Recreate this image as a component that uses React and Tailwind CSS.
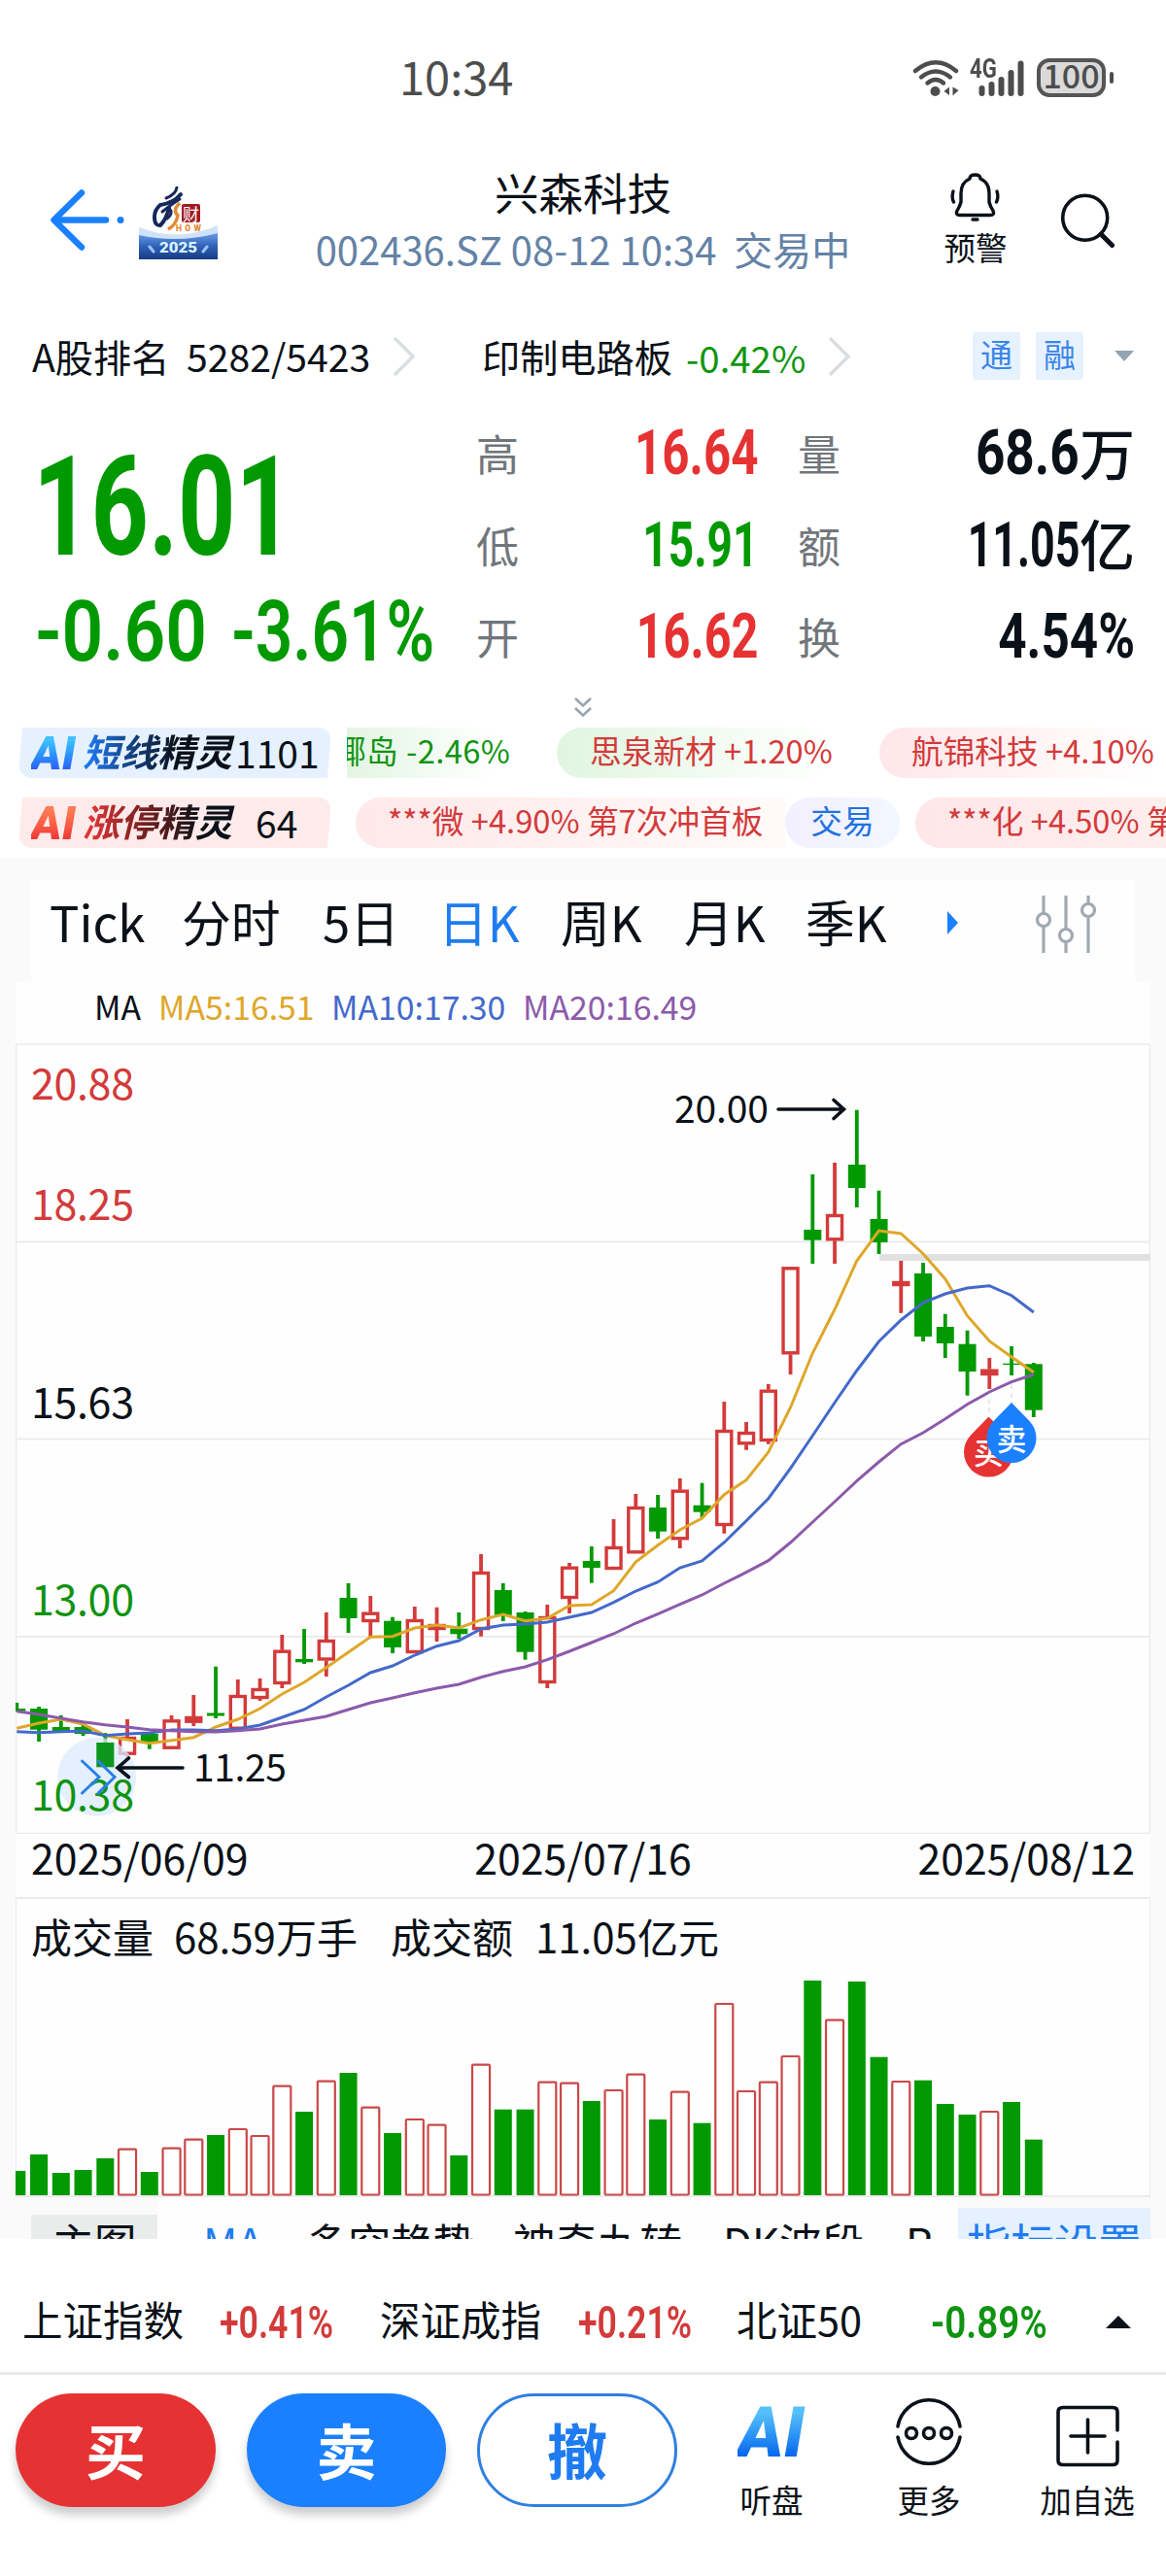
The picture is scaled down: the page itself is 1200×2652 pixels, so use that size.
import { Fragment } from 'react';

const RED = '#d33a3a';
const GREEN = '#009900';
const INK = '#0b1118';

// candle geometry: [direction, high, body top, body bottom, low, volume top]
const CANDLES = [
  ['g', 1753, 1759, 1761.5, 1762, 2235], ['g', 1757, 1759, 1780.7, 1793, 2218], ['g', 1766, 1778, 1782, 1782, 2237],
  ['g', 1775, 1778, 1785, 1787, 2234], ['g', 1784, 1794, 1819, 1819, 2222], ['r', 1770, 1788, 1806.7, 1811, 2212.7],
  ['g', 1784, 1785, 1795, 1800.7, 2236], ['r', 1766, 1770.3, 1800.7, 1800.7, 2211.7], ['r', 1745, 1767, 1773.7, 1777, 2202.7],
  ['g', 1715.7, 1763.5, 1766.5, 1769, 2198], ['r', 1729, 1745, 1780.7, 1780.7, 2192], ['r', 1728, 1738, 1749, 1751, 2199],
  ['r', 1683, 1698.7, 1734, 1738, 2147.7], ['g', 1677, 1708, 1711.3, 1713, 2174], ['r', 1660, 1688, 1709.5, 1726, 2142.7],
  ['g', 1630, 1645, 1666, 1681, 2134], ['r', 1643, 1659.7, 1670, 1686, 2169.7], ['g', 1664.7, 1668.7, 1696, 1702, 2196],
  ['r', 1654, 1667, 1702, 1702, 2182], ['r', 1654.7, 1672, 1678, 1690, 2187.7], ['g', 1660, 1676.7, 1682.3, 1687, 2219],
  ['r', 1600, 1618, 1678, 1684.7, 2125.7], ['g', 1630, 1637, 1662.7, 1669, 2171.7], ['g', 1659, 1660, 1700.7, 1708.7, 2171.7],
  ['r', 1652, 1664, 1733, 1738, 2143.7], ['r', 1609, 1612.7, 1646, 1661, 2144.7], ['g', 1592, 1607, 1614, 1629.7, 2163],
  ['r', 1564, 1592, 1616, 1616, 2152], ['r', 1538, 1551, 1599.3, 1599.3, 2135.7], ['g', 1539, 1552, 1576.7, 1584, 2182],
  ['r', 1522, 1533.7, 1585.3, 1594, 2153.7], ['g', 1526.7, 1549.7, 1556.7, 1562, 2185.7], ['r', 1443, 1472, 1571, 1578.7, 2063],
  ['r', 1464, 1474, 1487.3, 1492.7, 2153], ['r', 1425, 1430.7, 1484, 1486.7, 2143.7], ['r', 1304.3, 1304.3, 1394.3, 1415, 2117],
  ['g', 1209, 1266, 1276.7, 1301, 2039], ['r', 1197, 1250, 1277.3, 1301, 2079.7], ['g', 1142.7, 1199, 1223, 1243, 2040],
  ['g', 1225.7, 1255, 1279, 1291, 2117.7], ['r', 1298, 1319, 1324, 1351.7, 2143], ['g', 1300, 1311, 1376, 1381, 2141.7],
  ['g', 1352.7, 1366, 1383, 1398, 2166], ['g', 1369.7, 1383.7, 1412, 1436.7, 2177], ['r', 1398, 1409.7, 1416, 1430, 2174],
  ['g', 1386, 1403.7, 1405, 1416, 2164], ['g', 1403, 1404.3, 1451.7, 1459, 2202.7],
];

const MA5 = [1779.3, 1774, 1770, 1775, 1786.7, 1791, 1794.7, 1791.7, 1788.7, 1778, 1770, 1759, 1744, 1732, 1716.7, 1701, 1685.3, 1684.7, 1676, 1673, 1676, 1667.7, 1662, 1668.7, 1666, 1653, 1652, 1637.7, 1608, 1590.7, 1575, 1563, 1538.7, 1523.7, 1495, 1449, 1393, 1348, 1298, 1267, 1270, 1290.7, 1316.7, 1354.7, 1380.7, 1397, 1412.7];
const MA10 = [1782.7, 1783.7, 1782.7, 1782, 1786.7, 1785, 1784, 1781, 1781, 1781.7, 1780, 1776, 1768, 1760, 1747, 1735, 1722, 1715, 1704, 1694.7, 1689, 1677, 1673, 1672, 1670, 1665, 1660, 1649.7, 1638, 1628.7, 1614, 1607, 1588, 1565.7, 1542.7, 1511.7, 1478, 1444, 1411, 1381, 1359, 1341, 1332, 1326, 1323.7, 1333.7, 1351];
const MA20 = [1761.7, 1765, 1769, 1772.7, 1775.7, 1778, 1780.7, 1781.7, 1782.7, 1783, 1781.7, 1780, 1775, 1771, 1767, 1760, 1753, 1748, 1742.7, 1738, 1734, 1726.7, 1720.7, 1716, 1708.7, 1700, 1691, 1682, 1671, 1661.7, 1651.7, 1642, 1630, 1618.7, 1606.7, 1588, 1567, 1546, 1524.7, 1505, 1486.7, 1475, 1460.7, 1445.7, 1433, 1422.7, 1415];

const cx = (i) => 17.3 + 22.75 * i;
const points = (ys) => ys.map((y, i) => `${cx(i)},${y}`).join(' ');

function StatusBar() {
  return (
    <div className="flex h-[162px] items-center text-[#4d4d4d]">
      <span className="ml-[411px] w-[528px] text-[47px] leading-none -mt-[7px]">10:34</span>
      <svg width="48" height="40" viewBox="939 60 48 40" className="-mt-[1px]" fill="none" stroke="#4d4d4d" strokeWidth="4.4" strokeLinecap="round">
        <path d="M942 72 Q963 54.500 984 72" />
        <path d="M948 78.500 Q963 66.500 978 78.500" />
        <path d="M954.500 84.500 Q963 77.500 971 84.500" />
        <circle cx="962.500" cy="93" r="5" fill="#4d4d4d" stroke="none" />
        <path d="M971.500 93 l5.500 -4.500 v8.500 z M986.500 92 l-6 -3.500 v9 z" fill="#4d4d4d" stroke="none" />
      </svg>
      <div className="relative ml-[11px] -mt-[1px] h-[40px] w-[56px]">
        <span className="absolute left-0 -top-[3px] origin-left scale-x-[0.82] font-['Roboto'] text-[27px] font-bold leading-none">4G</span>
        <svg width="48" height="40" viewBox="1006 60 48 40" className="absolute left-[8px] top-0" stroke="#4d4d4d" strokeWidth="6" strokeLinecap="round">
          <path d="M1010.500 90 V95 M1020.500 86 V95 M1030.500 81 V95 M1040.500 74 V95 M1050.500 64.500 V95" />
        </svg>
      </div>
      <div className="-mt-[3px] ml-[13px] flex h-[40px] w-[71px] items-center justify-center rounded-[13px] border-[4px] border-[#555] bg-[#dadada]">
        <span className="text-[34px] font-medium leading-none -mt-[5px]">100</span>
      </div>
      <div className="-mt-[3px] ml-[4px] h-[12px] w-[4px] rounded-full bg-[#4d4d4d]" />
    </div>
  );
}

function ShowLogo() {
  return (
    <svg width="81" height="75" viewBox="0 0 81 75">
      <defs>
        <linearGradient id="sea" x1="0" y1="0" x2="0" y2="1">
          <stop offset="0" stopColor="#6d9be8" />
          <stop offset="0.5" stopColor="#2f62b8" />
          <stop offset="1" stopColor="#173a82" />
        </linearGradient>
      </defs>
      <rect width="81" height="75" fill="#fff" />
      <path d="M0 42 Q40 58 81 40 V75 H0 Z" fill="#cfe2f8" />
      <path d="M0 50 Q40 59 81 48 V75 H0 Z" fill="url(#sea)" />
      <g fill="none" stroke="#17295c" strokeLinecap="round">
        <path d="M39 1 Q38 8 28 12" strokeWidth="3" />
        <path d="M43 8 Q36 17 22 19 Q16 24 16 31 Q16 41 22 40 Q28 34 31 22" strokeWidth="4" />
        <path d="M24 26 Q34 18 42 13" strokeWidth="3" />
        <path d="M31 22 Q36 28 29 33" strokeWidth="3" />
      </g>
      <path d="M42 17 Q34 24 40 30 Q38 40 30 44" fill="none" stroke="#e28a34" strokeWidth="3.500" />
      <rect x="44" y="18" width="19" height="19" rx="2" fill="#a01c22" />
      <text x="45" y="34.500" fontSize="17" fill="#fff">财</text>
      <text x="38" y="46" fontSize="8.500" fontWeight="900" fill="#e28a34" textLength="26" fontFamily="Roboto">HOW</text>
      <text x="21" y="68" fontSize="14" fontWeight="900" fill="#d9f4ff" textLength="39" lengthAdjust="spacingAndGlyphs" fontFamily="Roboto">2025</text>
      <path d="M11 62 l4 5 M70 62 l-4 5" stroke="#9cc2ff" strokeWidth="3" strokeLinecap="round" />
    </svg>
  );
}

function Header() {
  return (
    <div className="flex h-[150px] items-start">
      <svg width="82" height="66" viewBox="48 193 82 66" className="ml-[48px] mt-[31px]" fill="none" stroke="#1a80ff" strokeWidth="6.500" strokeLinecap="round" strokeLinejoin="round">
        <path d="M84 198.500 L55.500 226.500 L84 254.500 M57 226.500 H109" />
        <circle cx="124" cy="226.500" r="3.500" fill="#1a80ff" stroke="none" />
      </svg>
      <div className="ml-[13px] mt-[30px]"><ShowLogo /></div>
      <div className="ml-[13px] flex w-[726px] flex-col items-center">
        <h1 className="mt-[13px] text-[45.500px] leading-none text-[#0b1118]">兴森科技</h1>
        <p className="mt-[15px] whitespace-pre text-[40px] leading-none text-[#6482a6]">{'002436.SZ 08-12 10:34  交易中'}</p>
      </div>
      <div className="ml-px flex w-[80px] flex-col items-center">
        <svg width="54" height="54" viewBox="978 176 54 54" className="mt-[14px]" fill="none" stroke={INK} strokeWidth="3.400" strokeLinecap="round" strokeLinejoin="round">
          <path d="M999 184 Q999 180 1004.500 180 Q1010 180 1010 184 Q1019 188 1019 199 V208 Q1020 212 1023 217 Q1025 221.500 1020 221.500 H989 Q984 221.500 986 217 Q989 212 990 208 V199 Q990 188 999 184 Z" />
          <path d="M1002 226 H1007" />
          <path d="M982 197 Q980 203 982.500 208 M1027 197 Q1029 203 1026.500 208" />
        </svg>
        <span className="mt-[8px] text-[32.500px] leading-none text-[#0b1118]">预警</span>
      </div>
      <svg width="60" height="60" viewBox="1090 198 60 60" className="ml-[46px] mt-[36px]" fill="none" stroke={INK} strokeLinecap="round">
        <circle cx="1116.700" cy="224.300" r="23" strokeWidth="3.600" />
        <path d="M1133 241 L1144.500 252.500" strokeWidth="5" />
      </svg>
    </div>
  );
}

function Chevron() {
  return (
    <svg width="24" height="42" viewBox="0 0 24 42" className="mt-[2px]" fill="none" stroke="#dadde1" strokeWidth="3.500">
      <path d="M2 2 L21 21 L2 40" />
    </svg>
  );
}

function RankRow() {
  return (
    <div className="flex h-[108px] items-center text-[39.200px] leading-none text-[#0b1118]">
      <span className="mt-[2px] ml-[33px] w-[159px]">A股排名</span>
      <span className="mt-[2px] w-[212px]">5282/5423</span>
      <Chevron />
      <span className="mt-[2px] ml-[68px] w-[210px]">印制电路板</span>
      <span className="mt-[2px] w-[146px] text-[38.400px] text-[#0f960f]">-0.42%</span>
      <Chevron />
      <span className="ml-[125px] h-[49px] w-[49px] rounded-[3px] bg-[#e6f2ff] pt-[6px] text-center text-[33px] text-[#3a86e8]">通</span>
      <span className="ml-[16px] h-[49px] w-[49px] rounded-[3px] bg-[#e6f2ff] pt-[6px] text-center text-[33px] text-[#3a86e8]">融</span>
      <svg width="20" height="11" viewBox="0 0 20 11" className="ml-[32px]"><path d="M0 0 H20 L10 11 Z" fill="#93a3b1" /></svg>
    </div>
  );
}

const STATS = [
  ['高', '16.64', 'text-[#e63232] scale-x-[0.77]', '量', '68.6', '万', 'scale-x-[0.83]'],
  ['低', '15.91', 'text-[#009900] scale-x-[0.72]', '额', '11.05', '亿', 'scale-x-[0.7]'],
  ['开', '16.62', 'text-[#e63232] scale-x-[0.76]', '换', '4.54%', '', 'scale-x-[0.8]'],
];

function Quote() {
  return (
    <div className="flex h-[284px]">
      <div className="w-[490px] pl-[34px] font-['Roboto'] text-[#009900]">
        <div className="mt-[32px] h-[142px] origin-left scale-x-[0.73] text-[142px] font-bold leading-none">16.01</div>
        <div className="ml-[2px] mt-[13px] flex whitespace-nowrap text-[87px] font-semibold leading-none">
          <span className="w-[202px] origin-left scale-x-[0.86]">-0.60</span>
          <span className="origin-left scale-x-[0.775]">-3.61%</span>
        </div>
      </div>
      <div className="w-[678px]">
        {STATS.map(([l1, v1, tone, l2, v2, unit, scale]) => (
          <div key={l1} className="flex h-[94.500px] items-center">
            <span className="-mt-[2px] w-[44px] text-[44px] leading-none text-[#71767b]">{l1}</span>
            <span className="flex w-[246px] justify-end font-['Roboto'] text-[64px] font-bold leading-none">
              <span className={`origin-right ${tone}`}>{v1}</span>
            </span>
            <span className="-mt-[2px] ml-[41px] w-[44px] text-[44px] leading-none text-[#71767b]">{l2}</span>
            <span className="flex w-[303px] items-center justify-end text-[#0b1118]">
              <span className={`origin-right font-['Roboto'] text-[64px] font-bold leading-none ${scale}`}>{v2}</span>
              {unit && <span className="-mt-[6px] text-[57px] font-medium leading-none">{unit}</span>}
            </span>
          </div>
        ))}
      </div>
    </div>
  );
}

function Badge({ kind, label, count }) {
  const blue = kind === 'blue';
  return (
    <div className="relative h-[52px] w-[357px] shrink-0">
      <svg width="321" height="52" viewBox="0 0 321 52" className="absolute left-[20px] top-0">
        <path d="M3 0 H307 Q321 1 320 14 L317 52 H12 Q-1 50 0 38 Z" fill={blue ? '#e5f1ff' : '#fdeaea'} />
      </svg>
      <div className="relative flex h-full items-center leading-none">
        <span className={`ml-[32px] w-[53px] bg-clip-text pr-[6px] pt-[2px] font-['Roboto'] text-[48px] font-black italic text-transparent ${blue ? 'bg-linear-to-b from-[#3fc0ff] from-25% to-[#2c5cf5] to-85%' : 'bg-linear-to-b from-[#ff7a55] from-25% to-[#ee3535] to-85%'}`}>AI</span>
        <span className={`-mt-[2px] h-[46px] w-[160px] whitespace-nowrap bg-clip-text pt-[2px] text-[38.500px] font-bold italic text-transparent ${blue ? 'bg-linear-to-r from-[#1d74ea] from-5% via-[#0d2340] via-50% to-[#0b1118] to-60%' : 'bg-linear-to-r from-[#e03535] from-5% via-[#5a1a1c] via-50% to-[#0b1118] to-75%'}`}>{label}</span>
        <span className={`-mt-[2px] text-[39px] text-[#0b1118] ${blue ? 'ml-[-3px]' : 'ml-[18px]'}`}>{count}</span>
      </div>
    </div>
  );
}

function Tickers() {
  return (
    <div className="flex h-[134px] flex-col gap-[20px] text-[32.700px] leading-none">
      <div className="flex h-[52px] overflow-hidden whitespace-nowrap">
        <Badge kind="blue" label="短线精灵" count="1101" />
        <div className="flex flex-1 overflow-hidden">
          <span className="flex w-[216px] shrink-0 bg-linear-to-r from-[#e3f5e3] to-white to-70% pt-[7px] tracking-[0.4px] text-[#109310]">
            <span className="-ml-[13px]">椰岛 -2.46%</span>
          </span>
          <span className="w-[332px] shrink-0 rounded-l-full bg-linear-to-r from-[#e0f5e0] to-white to-85% pl-[34px] pt-[7px] text-[#d33a3a]">思泉新材 +1.20%</span>
          <span className="w-[300px] shrink-0 rounded-l-full bg-linear-to-r from-[#ffe6e9] to-white to-95% pl-[33px] pt-[7px] text-[#d33a3a]">航锦科技 +4.10%</span>
        </div>
      </div>
      <div className="flex h-[52px] overflow-hidden whitespace-nowrap">
        <Badge kind="red" label="涨停精灵" count="64" />
        <div className="flex flex-1 overflow-hidden pl-[9px]">
          <span className="w-[442px] shrink-0 rounded-l-full bg-linear-to-r from-[#ffe8ea] to-[#fffaf8] pl-[33px] pt-[7px] text-[#d33a3a]">***微 +4.90% 第7次冲首板</span>
          <span className="w-[118px] shrink-0 rounded-full bg-linear-to-r from-[#f2f0fd] to-[#f3f7ff] pt-[7px] text-center text-[#2173dd]">交易</span>
          <span className="ml-[16px] w-[460px] shrink-0 rounded-l-full bg-linear-to-r from-[#ffe6e9] to-[#fff4f2] pl-[33px] pt-[7px] text-[#d33a3a]">***化 +4.50% 第7次冲首板</span>
        </div>
      </div>
    </div>
  );
}

function PeriodTabs() {
  return (
    <div className="mx-[32px] flex h-[104px] bg-[#fefefe] pl-[19px] pt-[17px] text-[50.800px] leading-none text-[#0b1118]">
      <span className="w-[136px]">Tick</span>
      <span className="w-[145px]">分时</span>
      <span className="w-[119px]">5日</span>
      <span className="w-[126px] text-[#1f7cf0]">日K</span>
      <span className="w-[127px]">周K</span>
      <span className="w-[125px]">月K</span>
      <span className="w-[146px]">季K</span>
      <svg width="11" height="24" viewBox="0 0 11 24" className="mt-[15px]"><path d="M0 0 L11 12 L0 24 Z" fill="#1a80ff" /></svg>
      <svg width="64" height="60" viewBox="1066 922 64 60" className="-mt-[1px] ml-[80px]" fill="#fefefe" stroke="#a0a9b1" strokeWidth="3.200">
        <path d="M1074 922 V981 M1097 922 V981 M1120 922 V981" />
        <circle cx="1074" cy="947" r="6.500" />
        <circle cx="1097" cy="963" r="6.500" />
        <circle cx="1120" cy="937" r="6.500" />
      </svg>
    </div>
  );
}

function Pin({ x, y, color, label }) {
  return (
    <g>
      <path d={`M${x} ${y - 37} L${x + 18.500} ${y - 18} A25.500 25.500 0 1 1 ${x - 18.500} ${y - 18} Z`} fill={color} />
      <text x={x} y={y + 11.500} textAnchor="middle" fontSize="31" fontWeight="500" fill="#fff">{label}</text>
    </g>
  );
}

function KLineChart() {
  return (
    <svg width="1168" height="814" viewBox="16 1074 1168 814" className="block">
      <rect x="16.500" y="1075" width="1167" height="812.500" fill="none" stroke="#ebebed" strokeWidth="1.500" />
      <path d="M16 1278.500 H1184 M16 1481.500 H1184 M16 1685 H1184" stroke="#ececee" strokeWidth="2" />
      <rect x="905" y="1291" width="279" height="7" fill="#e0e1e2" />
      <path d="M1018 1440 V1458 M1041 1425 V1445" stroke="#e6e8ea" strokeWidth="2" strokeDasharray="5 4" />
      {CANDLES.map(([dir, high, top, bottom, low], i) => (
        <Fragment key={i}>
          {dir === 'g' ? (
            <>
              <path d={`M${cx(i)} ${high} V${low}`} stroke={GREEN} strokeWidth="3.800" />
              <rect x={cx(i) - 9} y={top} width="18" height={bottom - top} fill={GREEN} />
            </>
          ) : (
            <>
              <path d={`M${cx(i)} ${high} V${top} M${cx(i)} ${bottom} V${low}`} stroke={RED} strokeWidth="3.800" />
              <rect x={cx(i) - 7.500} y={top + 1.500} width="15" height={bottom - top - 3} fill={bottom - top < 8 ? RED : '#fff'} stroke={RED} strokeWidth="3.400" />
            </>
          )}
        </Fragment>
      ))}
      <g fill="none" strokeWidth="3">
        <polyline points={points(MA5)} stroke="#dea72a" />
        <polyline points={points(MA10)} stroke="#4469cb" />
        <polyline points={points(MA20)} stroke="#8c5aab" />
      </g>
      <g fontSize="43">
        <text x="32" y="1132" fill={RED} textLength="106">20.88</text>
        <text x="32" y="1256" fill={RED} textLength="106">18.25</text>
        <text x="32" y="1459.500" fill={INK} textLength="106">15.63</text>
        <text x="32" y="1663" fill="#109310" textLength="106">13.00</text>
      </g>
      <circle cx="99.700" cy="1829.300" r="40.500" fill="#dbebfd" fillOpacity="0.750" />
      <rect x="99.300" y="1794" width="18" height="25.300" fill="#0c961c" />
      <text x="32" y="1863.500" fontSize="43" fill="#109310" textLength="106">10.38</text>
      <path d="M84.500 1813 L102 1829.500 L84.500 1846 M101 1813 L118 1829.500 L101 1846" fill="none" stroke="#2b80e4" strokeWidth="3" strokeLinecap="round" />
      <g fill="none" stroke={INK} strokeWidth="3.600" strokeLinecap="round">
        <path d="M188 1820 H121 M132.500 1810 L121 1820 L132.500 1829.500" />
        <path d="M801 1142 H868 M858 1132.500 L868.500 1142 L858 1151.500" />
      </g>
      <g fontSize="39" fill={INK}>
        <text x="199" y="1834" textLength="96">11.25</text>
        <text x="694" y="1156" textLength="97">20.00</text>
      </g>
      <Pin x={1017.5} y={1495.500} color="#e63232" label="买" />
      <Pin x={1041} y={1481} color="#1a80ff" label="卖" />
    </svg>
  );
}

function VolumeChart() {
  return (
    <svg width="1168" height="230" viewBox="16 2032 1168 230" className="block">
      {CANDLES.map((c, i) => (
        c[0] === 'g'
          ? <rect key={i} x={cx(i) - 9} y={c[5]} width="18" height={2260 - c[5]} fill={GREEN} />
          : <rect key={i} x={cx(i) - 9} y={c[5]} width="18" height={2259.500 - c[5]} rx="1" fill="#fff" stroke="#c94848" strokeWidth="2.200" />
      ))}
    </svg>
  );
}

function Chart() {
  return (
    <div className="h-[1422px] overflow-hidden bg-[#fafafa] pt-[23px]">
      <PeriodTabs />
      <div className="mx-[16px] bg-[#fefefe]">
        <div className="flex h-[64px] pl-[81px] pt-[9px] text-[33.800px] leading-none">
          <span className="w-[66px] text-[#0b1118]">MA</span>
          <span className="w-[178px] text-[#dea72a]">MA5:16.51</span>
          <span className="w-[197px] text-[#4469cb]">MA10:17.30</span>
          <span className="text-[#8c5aab]">MA20:16.49</span>
        </div>
        <KLineChart />
        <div className="flex h-[65px] justify-between px-[16px] pt-[2px] text-[42.800px] leading-none text-[#0b1118]">
          <span>2025/06/09</span>
          <span>2025/07/16</span>
          <span>2025/08/12</span>
        </div>
        <div className="h-[309px] border-x-[1px] border-b-[2px] border-t-[2px] border-[#ebebed]">
          <div className="flex h-[77px] pl-[15px] pt-[17px] text-[42px] leading-none text-[#0b1118]">
            <span className="w-[147px]">成交量</span>
            <span className="w-[223px]">68.59万手</span>
            <span className="w-[149px]">成交额</span>
            <span>11.05亿元</span>
          </div>
          <div className="-mx-px"><VolumeChart /></div>
        </div>
      </div>
      <div className="mr-[16px] flex h-[43px] text-[43.500px] leading-none text-[#0b1118]">
        <div className="ml-[32px] mt-[18px] w-[130px] bg-[#eaecec] pt-[6px] text-center">主图</div>
        <div className="flex flex-1 overflow-hidden whitespace-nowrap bg-[#fefefe] pt-[24px]">
          <span className="ml-[47px] w-[106px] text-[#1f7cf0]">MA</span>
          <span className="w-[213px]">多空趋势</span>
          <span className="w-[216px]">神奇九转</span>
          <span className="w-[188px]">DK波段</span>
          <span>R</span>
        </div>
        <div className="mt-[11px] w-[198px] bg-[#e5f1fe] pt-[13px] text-center text-[45px] text-[#1f7cf0]">指标设置</div>
      </div>
    </div>
  );
}

function IndexBar() {
  return (
    <div className="flex h-[137px] items-start pt-[62px] text-[41.500px] leading-none text-[#0b1118]">
      <span className="ml-[23px] w-[203px]">上证指数</span>
      <span className="mt-[1px] w-[165px] origin-left scale-x-[0.775] font-['Roboto'] text-[46px] font-semibold text-[#d33a3a]">+0.41%</span>
      <span className="w-[204px]">深证成指</span>
      <span className="mt-[1px] w-[163px] origin-left scale-x-[0.775] font-['Roboto'] text-[46px] font-semibold text-[#d33a3a]">+0.21%</span>
      <span className="w-[200px]">北证50</span>
      <span className="mt-[1px] w-[180px] origin-left scale-x-[0.84] font-['Roboto'] text-[46px] font-semibold text-[#109310]">-0.89%</span>
      <svg width="26" height="13" viewBox="0 0 26 13" className="mt-[17px]"><path d="M13 0 L26 13 H0 Z" fill={INK} /></svg>
    </div>
  );
}

function ActionBar() {
  return (
    <div className="flex h-[210px] items-start border-t-[3px] border-[#e9e9ea] leading-none text-[#0b1118]">
      <button className="ml-[16px] mt-[19px] h-[117px] w-[206px] rounded-full bg-[#e63232] pb-[4px] text-[62px] font-bold text-white shadow-[0_8px_10px_rgba(0,0,0,0.2)]">买</button>
      <button className="ml-[32px] mt-[19px] h-[117px] w-[205px] rounded-full bg-[#1a80ff] pb-[4px] text-[62px] font-bold text-white shadow-[0_8px_10px_rgba(0,0,0,0.2)]">卖</button>
      <button className="ml-[32px] mt-[19px] h-[117px] w-[206px] rounded-full border-[3px] border-[#2f7fe0] pb-[4px] text-[62px] font-bold text-[#1f7cf0]">撤</button>
      <div className="ml-[47px] flex w-[100px] flex-col items-center">
        <span className="ml-[5px] mt-[24px] h-[74px] bg-linear-to-b from-[#55c0fb] from-20% to-[#0866ee] to-80% bg-clip-text pr-[6px] font-['Roboto'] text-[72px] font-black italic text-transparent">AI</span>
        <span className="mt-[14px] text-[32.500px]">听盘</span>
      </div>
      <div className="ml-[62px] flex w-[100px] flex-col items-center">
        <svg width="72" height="74" viewBox="919 2466 72 74" className="mt-[21px]" fill="none" stroke={INK} strokeWidth="3.600" strokeLinecap="round">
          <path d="M923 2498 A32.500 33 0 0 1 987 2498 M923 2509 A32.500 33 0 0 0 987 2509" />
          <circle cx="937" cy="2505" r="5.500" />
          <circle cx="955" cy="2505" r="5.500" />
          <circle cx="973" cy="2505" r="5.500" />
        </svg>
        <span className="mt-[17px] text-[32.500px]">更多</span>
      </div>
      <div className="ml-[58px] flex w-[110px] flex-col items-center">
        <svg width="68" height="66" viewBox="1085 2475 68 66" className="mt-[30px]" fill="none" stroke={INK} strokeWidth="3.600" strokeLinecap="round">
          <path d="M1150 2502 V2483 Q1150 2478.500 1145 2478.500 H1094 Q1089 2478.500 1089 2483 V2533 Q1089 2537.500 1094 2537.500 H1145 Q1150 2537.500 1150 2533 V2514" />
          <path d="M1102 2508 H1137 M1119.500 2491 V2525" />
        </svg>
        <span className="mt-[16px] text-[32.500px]">加自选</span>
      </div>
    </div>
  );
}

export default function App() {
  return (
    <div className="h-[2652px] w-[1200px] overflow-hidden bg-white font-['Noto_Sans_CJK_SC',sans-serif]">
      <StatusBar />
      <Header />
      <RankRow />
      <Quote />
      <div className="flex h-[45px] justify-center pt-[14px]">
        <svg width="18" height="20" viewBox="0 0 18 20" fill="none" stroke="#9aa4ae" strokeWidth="2.600">
          <path d="M1 1 L9 8.500 L17 1 M1 11 L9 18.500 L17 11" />
        </svg>
      </div>
      <Tickers />
      <Chart />
      <IndexBar />
      <ActionBar />
    </div>
  );
}
